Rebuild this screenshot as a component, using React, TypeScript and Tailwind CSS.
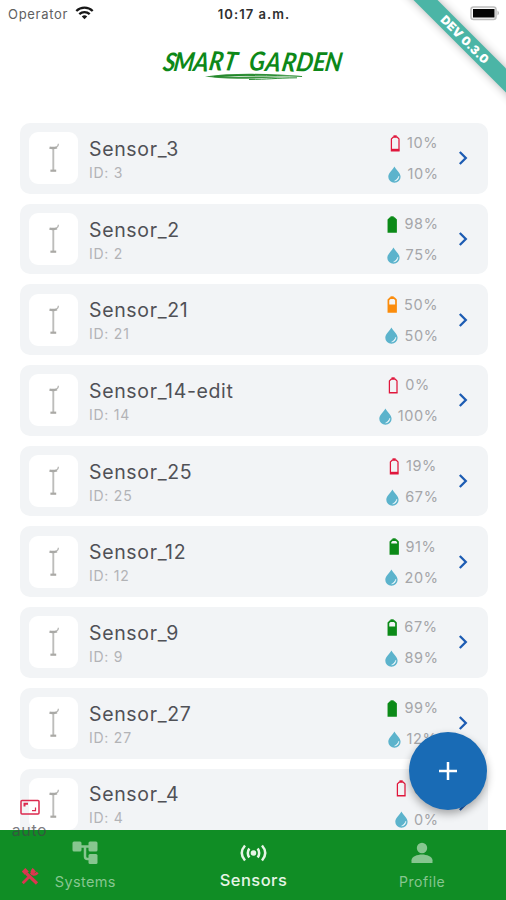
import React from "react";

type Sensor = { id: number; name: string; battery: number; water: number };

const sensors: Sensor[] = [
  { id: 3, name: "Sensor_3", battery: 10, water: 10 },
  { id: 2, name: "Sensor_2", battery: 98, water: 75 },
  { id: 21, name: "Sensor_21", battery: 50, water: 50 },
  { id: 14, name: "Sensor_14-edit", battery: 0, water: 100 },
  { id: 25, name: "Sensor_25", battery: 19, water: 67 },
  { id: 12, name: "Sensor_12", battery: 91, water: 20 },
  { id: 9, name: "Sensor_9", battery: 67, water: 89 },
  { id: 27, name: "Sensor_27", battery: 99, water: 12 },
  { id: 4, name: "Sensor_4", battery: 0, water: 0 },
];

function Battery({ level }: { level: number }) {
  const color = level < 20 ? "#e0173c" : level <= 50 ? "#fb8c0c" : "#0c8a18";
  const top = level >= 98 ? 3 : level > 90 ? 5.5 : level > 60 ? 7.5 : level > 40 ? 8.5 : level > 0 ? 13.8 : 15;
  return (
    <svg className="h-[17px] w-[13px]" viewBox="0 0 13 17">
      <path d="M4.5 .3h3.200v1.800H4.500z" fill={color} />
      <path d="M2.4 3.900 4.200 2.200h4.100l1.700 1.700v11.900H2.400z" fill="none" stroke={color} strokeWidth={level < 20 ? 1.25 : 1.7} />
      <path d={`M2.200 ${top}H10.200V16H2.200z`} fill={color} />
    </svg>
  );
}

function Drop() {
  return (
    <svg className="h-[17px] w-[13px]" viewBox="0 0 13 17">
      <path d="M6.4.4C8.1 3.7 12.6 7 12.6 10.7a6.1 6.1 0 0 1-12.3 0C.3 7 4.8 3.8 6.4.4z" fill="#5cb3cc" />
      <path d="M10.8 10.2c.2 2.5-1.4 4.6-4.2 4.7 1.9-1 3.3-2.3 4.2-4.7z" fill="#f3fafc" stroke="#f3fafc" strokeWidth=".5" />
    </svg>
  );
}

function Probe() {
  return (
    <svg className="h-[32px] w-[14px]" viewBox="0 0 14 32" fill="none">
      <path d="M6.300 6v22" stroke="#bdbdbb" strokeWidth="1.900" />
      <path d="M2.500 5.600q3.500.9 7.500-.3" stroke="#a9a9a6" strokeWidth="2.300" />
      <path d="M9.500 5.200Q11.500 4 11.400 1.800" stroke="#b7b7b5" strokeWidth="1.300" />
      <path d="M3.400 28.700h5.800" stroke="#aaa9a5" strokeWidth="2.200" />
    </svg>
  );
}

function Card({ s }: { s: Sensor }) {
  return (
    <div className="flex h-[70.7px] shrink-0 items-center rounded-[10px] bg-[#f2f4f6] pl-[9px] pr-[17px]">
      <div className="flex h-[52px] w-[49px] items-center justify-center rounded-[9px] bg-white">
        <Probe />
      </div>
      <div className="ml-[11px] flex-1 pt-[4px]">
        <div className="text-[19.5px] leading-[24px] tracking-[.65px] text-[#505156]">{s.name}</div>
        <div className="mt-[1px] text-[14px] leading-[22px] tracking-[.75px] text-[#b2b3b6]">ID: {s.id}</div>
      </div>
      <div className="flex flex-col items-center gap-[9px] pt-px text-[14.500px] leading-[22px] tracking-[.6px] text-[#a5a6a9]">
        <div className="flex h-[22px] items-center gap-[5px]"><Battery level={s.battery} />{s.battery}%</div>
        <div className="flex h-[22px] items-center gap-[6px]"><Drop />{s.water}%</div>
      </div>
      <svg className="ml-[16px] h-[16px] w-[16px]" viewBox="0 0 16 16" fill="none">
        <path d="M4.800 2 10.800 8 4.800 14" stroke="#1d5cb3" strokeWidth="2.300" />
      </svg>
    </div>
  );
}

function Logo() {
  return (
    <svg className="h-[44px] w-[200px]" viewBox="0 0 200 44">
      <g fill="#0d8818" fontFamily="Lato" fontStyle="italic" fontWeight="700" fontSize="26" transform="translate(9 30) skewX(-8) scale(.9 1)">
        <text x="0 12 34 51 67" y="-.5 -.5 0 -1 -1" rotate="6 0 2 2 4">SMART</text>
        <text x="96 114 132 148 167 180" y="0 0 0 0 0 0" rotate="-3 2 3 2 0 1">GARDEN</text>
      </g>
      <path d="M52 35.500c29-4 64-3 99-.2-29-1.500-56-1.200-82.500.8 26-.2 52-1.500 74 .2-28-.4-51 3-77 .8-5-.4-8-1-13.500-1.600z" fill="#38913d" />
      <path d="M61 35.500c28-2 54-1.500 88 0M96 38.500c19-.2 26-1.400 48-1.700" fill="none" stroke="#188522" strokeWidth=".9" />
    </svg>
  );
}

export default function App() {
  return (
    <div className="relative flex h-[900px] w-[506px] flex-col overflow-hidden bg-white font-['Inter','Liberation_Sans',sans-serif]">
      <header className="flex h-[28px] shrink-0 items-center px-[8px] pr-[6px] text-[13px] leading-[18px]">
        <div className="flex flex-1 items-center gap-[7px] tracking-[.7px] text-[#606060]">
          Operator
          <svg className="mb-[3px] h-[14px] w-[19px]" viewBox="0 0 19 14" fill="none" stroke="#171717">
            <path d="M1.300 5c4.600-4.400 11.800-4.400 16.400 0M4.300 8.200c3-2.800 7.400-2.800 10.400 0" strokeWidth="2.300" />
            <path d="m6.800 10.400 2.700 2.800 2.700-2.800c-1.600-1.400-3.800-1.400-5.400 0z" fill="#171717" stroke="none" />
          </svg>
        </div>
        <div className="text-[13px] font-semibold tracking-[1.050px] text-[#303030]">10:17 a.m.</div>
        <div className="flex flex-1 justify-end">
          <svg className="mb-[2px] h-[15px] w-[30px]" viewBox="0 0 30 15">
            <rect x="1" y="1" width="25" height="12.500" rx="2.500" fill="#fafafa" stroke="#bdbdbd" strokeWidth="1.500" />
            <rect x="3" y="3" width="21.500" height="8.500" fill="#050505" />
            <path d="M27.500 4.500q3 2.500 0 5z" fill="#b5b5b5" />
          </svg>
        </div>
      </header>
      <div className="flex h-[95px] shrink-0 justify-center pt-[13px]"><Logo /></div>
      <main className="flex min-h-0 flex-1 flex-col gap-[10px] overflow-hidden pl-[20px] pr-[18.500px]">
        {sensors.map((s) => <Card key={s.id} s={s} />)}
      </main>
      <nav className="grid h-[70.500px] shrink-0 grid-cols-3 bg-[#108d25] text-[#87c690]">
        <div className="flex flex-col items-center pl-[2px] pt-[10px]">
          <svg className="h-[26px] w-[26px]" viewBox="0 0 26 26" fill="currentColor">
            <rect x=".5" y="1.500" width="9" height="10" rx="1.500" />
            <rect x="16.500" y="1.500" width="9" height="10" rx="1.500" />
            <rect x="16.500" y="14" width="9" height="10" rx="1.500" />
            <path d="M8 6.500h10M13 6.500v10q0 2.500 2.500 2.500H18" fill="none" stroke="currentColor" strokeWidth="2.500" />
          </svg>
          <div className="mt-[6px] text-[14.500px] leading-[20px] tracking-[.35px]">Systems</div>
        </div>
        <div className="flex flex-col items-center pl-px pt-[11px] text-[#e6f5e6]">
          <svg className="h-[24px] w-[27px]" viewBox="0 0 27 24" fill="none" stroke="currentColor" strokeWidth="2.500">
            <circle cx="13.500" cy="12" r="2.800" fill="currentColor" stroke="none" />
            <path d="M9.300 7.500q-3 4.500 0 9M5 4.500q-6.500 7.500 0 15M17.700 7.500q3 4.500 0 9M22 4.500q6.500 7.500 0 15" />
          </svg>
          <div className="mt-[4px] text-[16.500px] font-medium leading-[22px] tracking-[.45px]">Sensors</div>
        </div>
        <div className="flex flex-col items-center pl-px pt-[11px]">
          <svg className="h-[24px] w-[22px]" viewBox="0 0 22 24" fill="currentColor">
            <circle cx="11" cy="7" r="5.200" />
            <path d="M.5 22v-2.800c0-3.600 6-5.700 10.500-5.700s10.500 2.100 10.500 5.700V22z" />
          </svg>
          <div className="mt-[7px] text-[14px] leading-[20px] tracking-[.55px]">Profile</div>
        </div>
      </nav>

      {/* Floating action button */}
      <button className="absolute left-[409px] top-[732px] flex h-[78px] w-[78px] items-center justify-center rounded-full bg-[#196bb5] shadow-[0_4px_8px_rgba(0,0,0,.32)]">
        <svg className="h-[20px] w-[20px]" viewBox="0 0 20 20"><path d="M10 1v18M1 10h18" stroke="white" strokeWidth="2.500" /></svg>
      </button>

      {/* Developer overlay controls */}
      <div className="absolute left-[11px] top-[799px] flex w-[37px] flex-col items-center">
        <svg className="h-[17px] w-[20px]" viewBox="0 0 20 17" fill="none" stroke="#dc294e" strokeWidth="1.500">
          <rect x="1" y="1.500" width="18" height="13.500" rx="1" />
          <path d="M4.500 7.500V4.700H8" strokeWidth="2" /><path d="M12 11.700h3.500V8.500" strokeWidth="1.200" />
        </svg>
        <div className="mt-[4px] text-[16px] leading-[20px] tracking-[.6px] text-[#424348]/70">auto</div>
      </div>
      <svg className="absolute left-[20.500px] top-[867px] h-[19px] w-[18px]" viewBox="0 0 18 18" fill="none" stroke="#dc3550">
        <path d="m8 9.500-6.300 6.300M10 7l4-4" strokeWidth="2.800" />
        <path d="m5.500 6 10.500 10" strokeWidth="3.200" />
        <path d="m.8 4 3.500-3.500 3.500 3.500L4 7.500z" fill="#dc3550" stroke="none" />
        <path d="M12.500 1.200q-3 3.500-.8 5.200t5-1.200" strokeWidth="2.500" />
      </svg>
      <div className="absolute left-[379.500px] top-[30.500px] flex h-[17px] w-[170px] rotate-45 items-center justify-center bg-[#4bb5a6] text-[12px] font-black leading-[17px] tracking-[.2px] text-white shadow-[0_0_10px_rgba(0,0,0,.3)]">DEV 0.3.0</div>
    </div>
  );
}
